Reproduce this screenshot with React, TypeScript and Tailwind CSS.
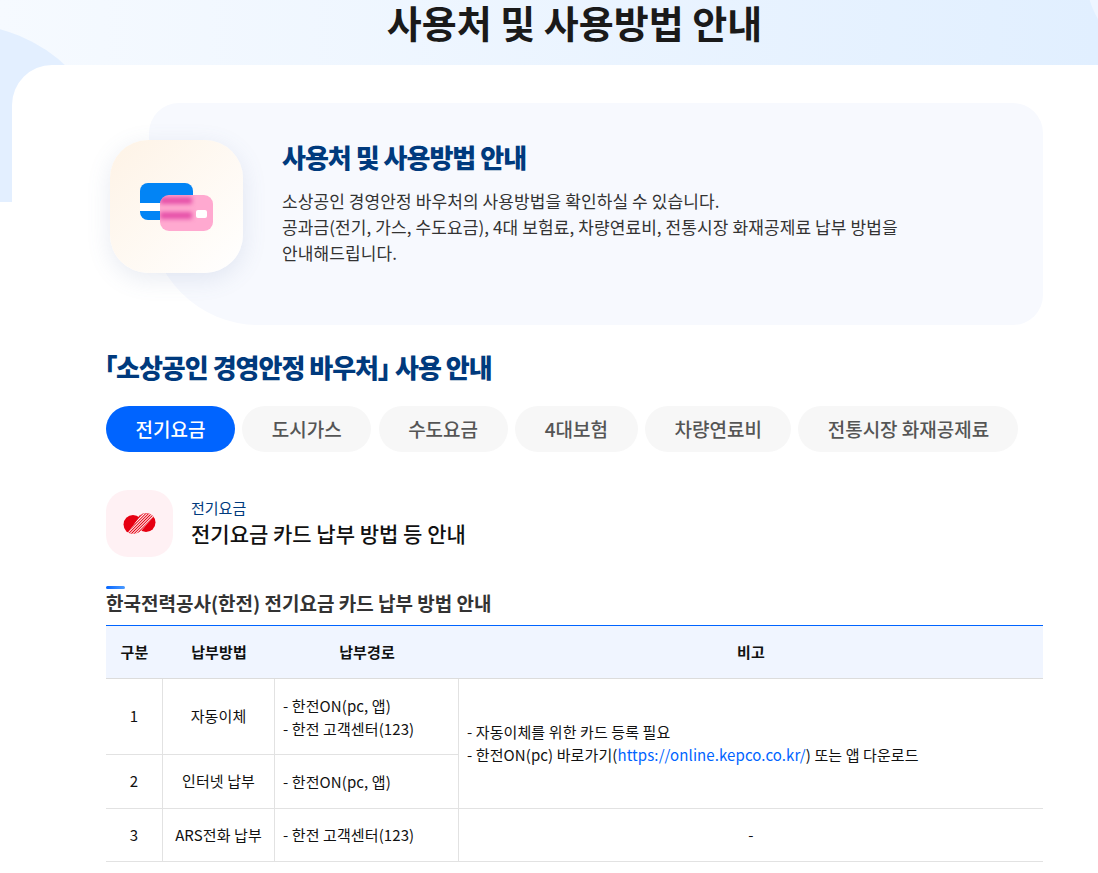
import { Fragment } from "react";

const tabs = ["전기요금", "도시가스", "수도요금", "4대보험", "차량연료비", "전통시장 화재공제료"];
const tabWidths = ["w-[129px]", "w-[129px]", "w-[129px]", "w-[123px]", "w-[146px]", "w-[220px]"];

const CardIcon = () => (
  <div className="relative w-[73px] h-[48px]">
    <div className="absolute left-0 top-0 w-[53px] h-[37px] rounded-[8px] bg-[#0284f5] overflow-hidden">
      <div className="mt-[20px] h-[8px] bg-white" />
    </div>
    <div className="absolute left-[20px] top-[12px] w-[53px] h-[36px] rounded-[9px] bg-[#ffa9d0] overflow-hidden">
      <div className="absolute left-0 top-[2px] w-[32px] h-[7px] bg-[#e650a8] blur-[2px]" />
      <div className="absolute left-0 top-[17px] w-[32px] h-[7px] bg-[#e650a8] blur-[2px]" />
      <div className="absolute right-[6px] top-[15px] w-[11px] h-[8px] rounded-[2px] bg-white" />
    </div>
  </div>
);

const KepcoIcon = () => (
  <svg width="33" height="21" viewBox="0 0 33 21">
    <defs>
      <pattern id="hatch" width="2" height="2" patternUnits="userSpaceOnUse" patternTransform="rotate(-45)">
        <rect width="2" height="2" fill="#fff" />
        <rect width="2" height="1" fill="#e60012" />
      </pattern>
    </defs>
    <circle cx="10" cy="11.5" r="9.5" fill="#e60012" />
    <circle cx="23" cy="9.5" r="9.5" fill="#e60012" />
    <path d="M5 19.5 L19 1 Q26 -0.5 30.5 3.5 L17 19 Q11 22 5 19.5 Z" fill="#fff" />
    <path d="M5 19.5 L19 1 Q26 -0.5 30.5 3.5 L17 19 Q11 22 5 19.5 Z" fill="url(#hatch)" />
  </svg>
);

const cell = "border-b border-r border-[#e2e2e2] flex items-center";

const App = () => {
  return (
    <div className="relative h-[873px] overflow-hidden bg-white text-[#222] font-['Noto_Sans_CJK_KR','Noto_Sans',sans-serif]">
      {/* Background */}
      <div className="absolute left-0 top-0 w-full h-[202px] overflow-hidden bg-gradient-to-r from-[#f6faff] to-[#e1efff]">
        <div className="absolute left-[-195px] top-[24px] w-[310px] h-[310px] rounded-full bg-[#e3efff]" />
        <div className="absolute left-[1085px] top-[-130px] w-[200px] h-[200px] rounded-full bg-[#eef5ff]" />
      </div>

      <div className="relative">
        <h1 className="h-[65px] pb-[21px] pl-[51px] flex items-center justify-center text-[38px] leading-[44px] font-bold text-[#1a1a1a]">
          사용처 및 사용방법 안내
        </h1>

        <div className="ml-[12px] rounded-tl-[40px] bg-white pt-[38px] pl-[94px] pr-[55px]">
          {/* Intro */}
          <section className="relative h-[222px]">
            <div className="absolute left-[43px] right-0 top-0 bottom-0 bg-[#f7f9fe] rounded-[30px] rounded-bl-[110px]" />
            <div className="relative flex items-start pt-[37px] pl-[4px]">
              <div className="w-[133px] h-[133px] rounded-[38px] bg-gradient-to-br from-[#fef3e6] to-white shadow-[0_6px_24px_rgba(90,110,160,0.14)] flex items-center justify-center shrink-0">
                <CardIcon />
              </div>
              <div className="ml-[39px] mt-[-1px]">
                <h2 className="text-[26px] leading-[36px] font-black text-[#003a7d] tracking-[-1px]">
                  사용처 및 사용방법 안내
                </h2>
                <p className="mt-[13px] text-[17px] leading-[26px] tracking-[0.1px] text-[#333]">
                  소상공인 경영안정 바우처의 사용방법을 확인하실 수 있습니다.
                  <br />
                  공과금(전기, 가스, 수도요금), 4대 보험료, 차량연료비, 전통시장 화재공제료 납부 방법을
                  <br />
                  안내해드립니다.
                </p>
              </div>
            </div>
          </section>

          <h2 className="mt-[21px] h-[40px] flex items-center text-[26px] font-black text-[#003a7d] tracking-[-1px] [font-feature-settings:'palt'] ml-[-2px]">
            「소상공인 경영안정 바우처」 사용 안내
          </h2>

          {/* Tabs */}
          <div className="mt-[20px] flex gap-[7.3px]">
            {tabs.map((tab, i) => (
              <div
                key={tab}
                className={`${tabWidths[i]} h-[46px] rounded-full flex items-center justify-center text-[19px] font-medium ${
                  i === 0 ? "bg-[#0064ff] text-white" : "bg-[#f7f7f7] text-[#555]"
                }`}
              >
                {tab}
              </div>
            ))}
          </div>

          {/* Sub heading */}
          <div className="mt-[38px] flex items-center">
            <div className="w-[67px] h-[67px] rounded-[22px] bg-[#fff1f4] flex items-center justify-center shrink-0">
              <KepcoIcon />
            </div>
            <div className="ml-[18px] mt-[-1px]">
              <div className="text-[15px] leading-[20px] text-[#003a7d]">전기요금</div>
              <div className="text-[21px] leading-[30px] font-medium text-[#111]">
                전기요금 카드 납부 방법 등 안내
              </div>
            </div>
          </div>

          <div className="mt-[29px] w-[19px] h-[3px] rounded-full bg-gradient-to-r from-[#0064ff] to-[#4b9bff]" />
          <h3 className="h-[28px] flex items-center text-[19px] font-bold text-[#333]">
            한국전력공사(한전) 전기요금 카드 납부 방법 안내
          </h3>

          {/* Table */}
          <div className="mt-[8px] border-t border-[#0064ff] grid grid-cols-[57px_112px_184px_1fr] grid-rows-[53px_76px_54px_53px] text-[15px] tracking-[0.1px] text-[#111]">
            {["구분", "납부방법", "납부경로", "비고"].map((h) => (
              <div
                key={h}
                className="bg-[#f0f5ff] border-b border-[#dcdcdc] flex items-center justify-center font-bold text-[#111]"
              >
                {h}
              </div>
            ))}
            {[
              ["1", "자동이체", ["- 한전ON(pc, 앱)", "- 한전 고객센터(123)"]],
              ["2", "인터넷 납부", ["- 한전ON(pc, 앱)"]],
            ].map(([no, method, routes], i) => (
              <Fragment key={no as string}>
                <div className={`${cell} justify-center`}>{no as string}</div>
                <div className={`${cell} justify-center`}>{method as string}</div>
                <div className={`${cell} px-[8px] leading-[23px]`}>
                  <div>
                    {(routes as string[]).map((r) => (
                      <div key={r}>{r}</div>
                    ))}
                  </div>
                </div>
                {i === 0 && (
                  <div className="row-span-2 border-b border-[#e2e2e2] flex items-center px-[8px] pb-[2px] leading-[23px]">
                    <div>
                      <div>- 자동이체를 위한 카드 등록 필요</div>
                      <div>
                        - 한전ON(pc) 바로가기(<span className="text-[#0064ff]">https://online.kepco.co.kr/</span>) 또는 앱 다운로드
                      </div>
                    </div>
                  </div>
                )}
              </Fragment>
            ))}
            <div className={`${cell} justify-center`}>3</div>
            <div className={`${cell} justify-center`}>ARS전화 납부</div>
            <div className={`${cell} px-[8px]`}>- 한전 고객센터(123)</div>
            <div className="border-b border-[#e2e2e2] flex items-center justify-center">-</div>
          </div>
        </div>
      </div>
    </div>
  );
};

export default App;
